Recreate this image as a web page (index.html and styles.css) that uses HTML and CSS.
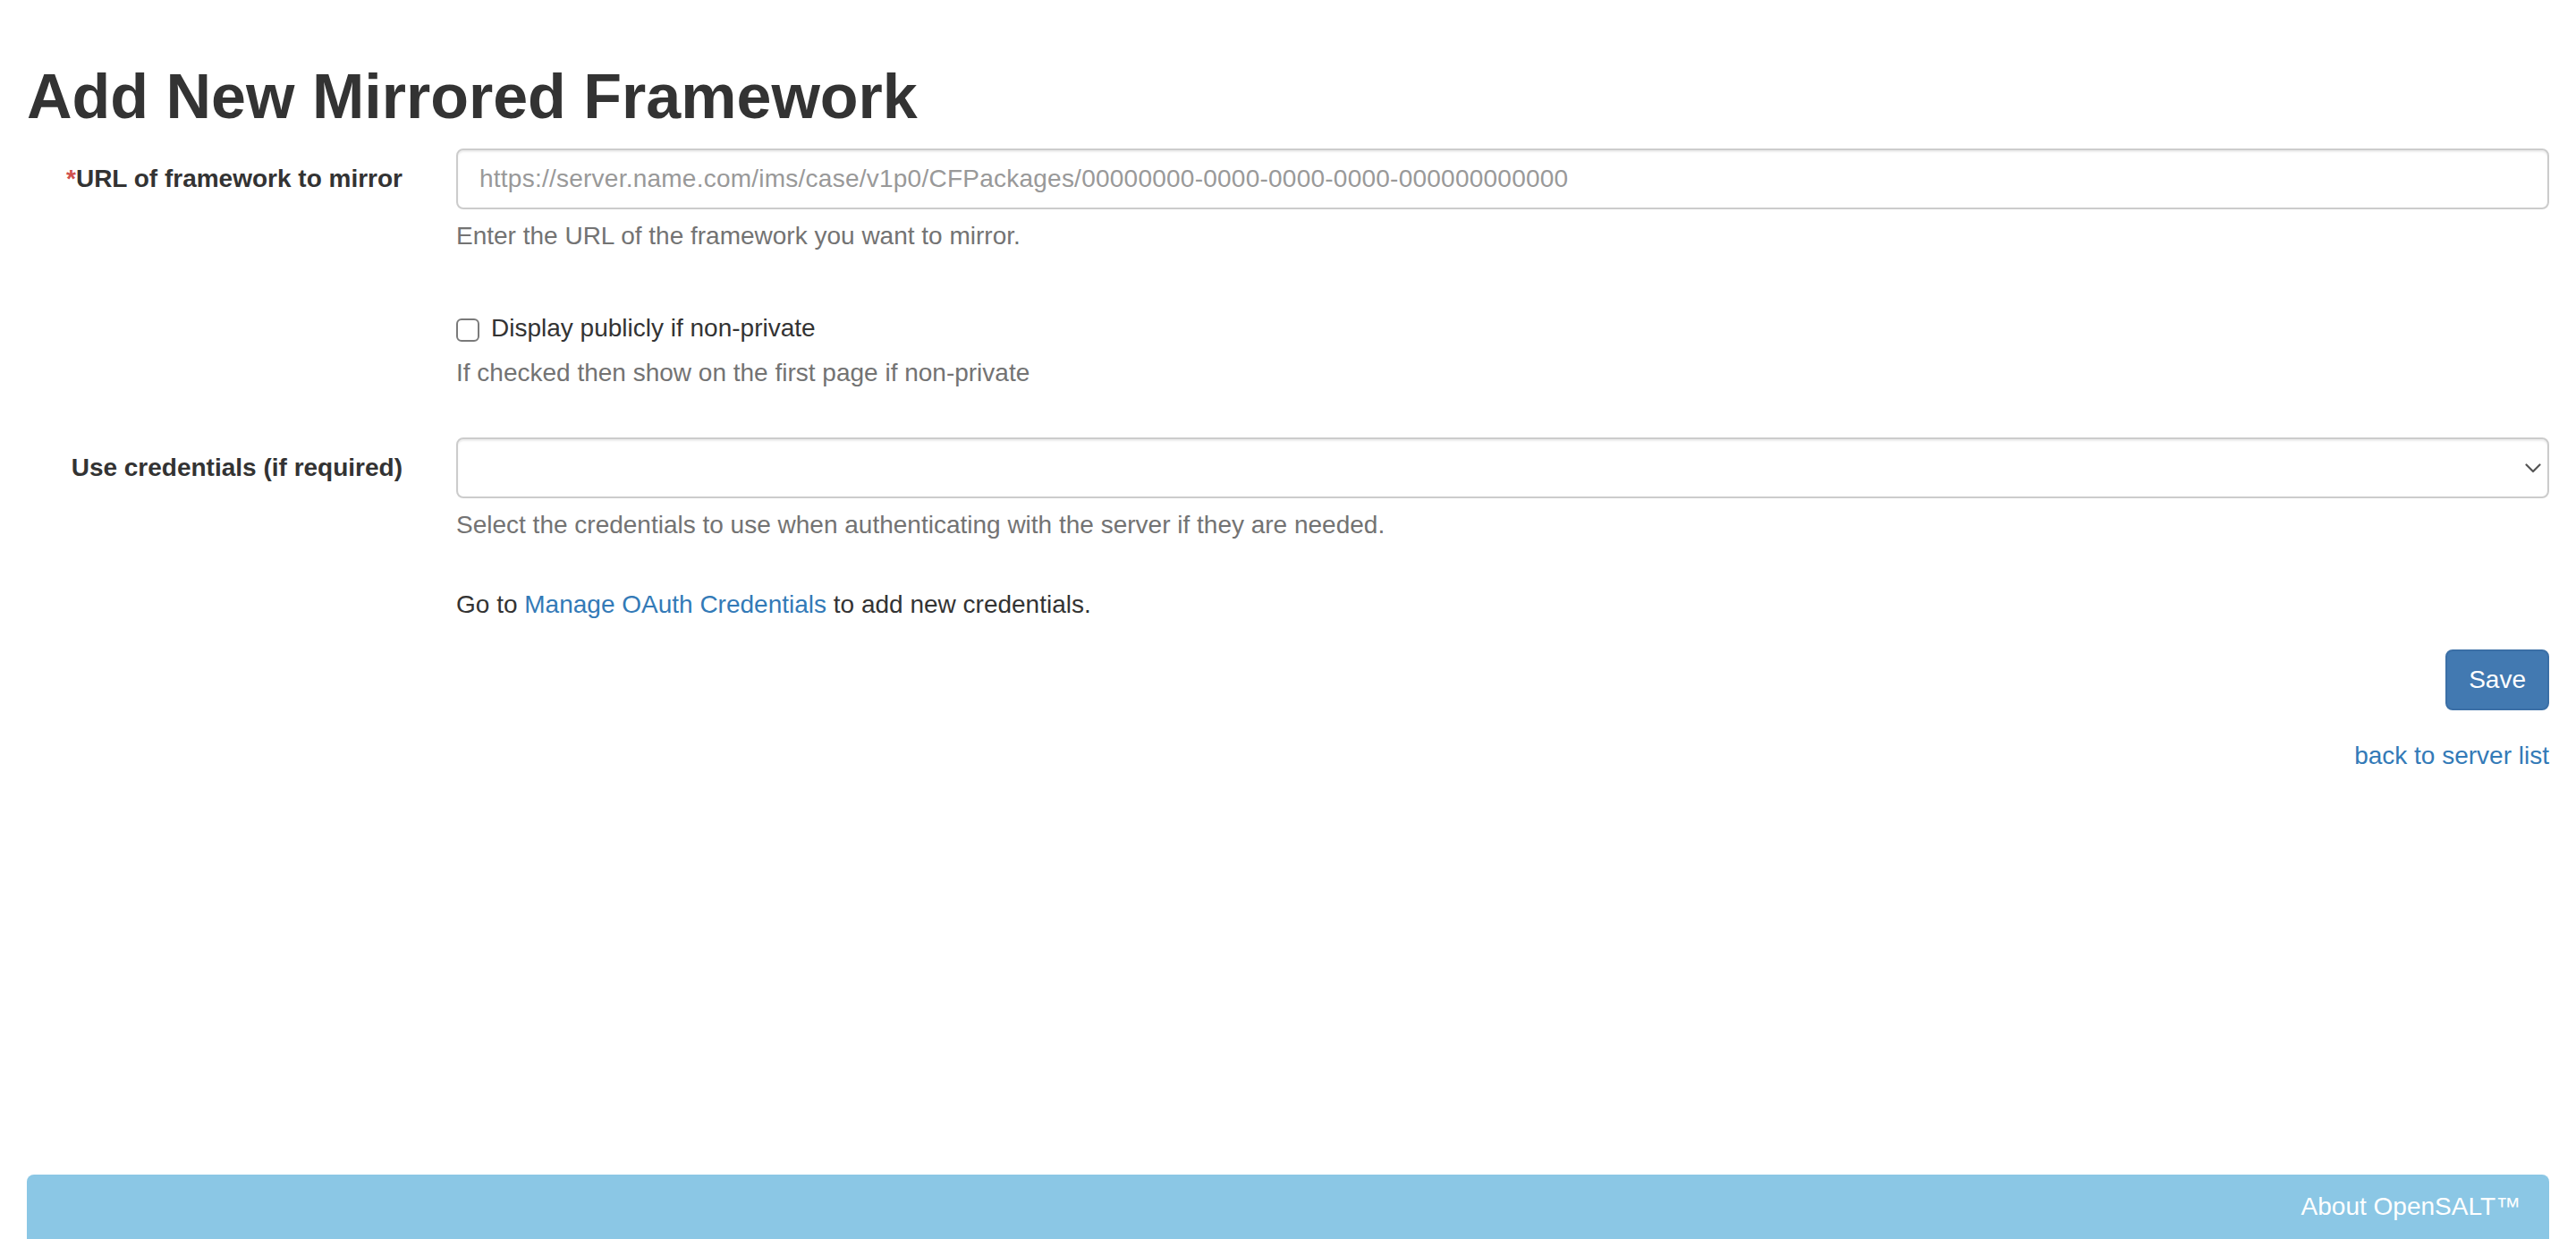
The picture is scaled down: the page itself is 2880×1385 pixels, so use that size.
FILE: index.html
```html
<!DOCTYPE html>
<html lang="en">
<head>
<meta charset="utf-8">
<title>Add New Mirrored Framework</title>
<link rel="stylesheet" href="styles.css">
</head>
<body>
<div class="page">
  <main class="container">
    <h1 class="title">Add New Mirrored Framework</h1>
    <form class="form">
      <div class="form-group">
        <label class="control-label" for="url"><span class="req">*</span>URL of framework to mirror</label>
        <div class="field">
          <input class="form-control url-input" id="url" type="text" placeholder="https://server.name.com/ims/case/v1p0/CFPackages/00000000-0000-0000-0000-000000000000">
          <p class="help-block">Enter the URL of the framework you want to mirror.</p>
        </div>
      </div>
      <div class="form-group group-check">
        <div class="spacer"></div>
        <div class="field">
          <label class="checkbox"><input type="checkbox" class="check"><span>Display publicly if non-private</span></label>
          <p class="help-block">If checked then show on the first page if non-private</p>
        </div>
      </div>
      <div class="form-group">
        <label class="control-label" for="cred">Use credentials (if required)</label>
        <div class="field">
          <div class="select-wrap">
            <select class="form-control select" id="cred"><option></option></select>
            <svg class="chevron" width="18" height="11" viewBox="0 0 18 11"><path d="M1.5 1.5 L9 9 L16.5 1.5" fill="none" stroke="#555" stroke-width="2.2" stroke-linecap="round" stroke-linejoin="round"/></svg>
          </div>
          <p class="help-block">Select the credentials to use when authenticating with the server if they are needed.</p>
        </div>
      </div>
      <div class="form-group group-note">
        <div class="spacer"></div>
        <div class="field">
          <p class="note">Go to <a href="#">Manage OAuth Credentials</a> to add new credentials.</p>
        </div>
      </div>
      <div class="actions">
        <button type="button" class="btn">Save</button>
      </div>
      <div class="back">
        <a href="#">back to server list</a>
      </div>
    </form>
  </main>
  <footer class="footer">
    <a href="#" class="footer-link">About OpenSALT™</a>
  </footer>
</div>
</body>
</html>
```

FILE: styles.css
```css
* { box-sizing: border-box; }
html, body { margin: 0; padding: 0; }
body {
  font-family: "Liberation Sans", Arial, sans-serif;
  font-size: 28px;
  line-height: 40px;
  color: #333;
  background: #fff;
}
a { color: #337ab7; text-decoration: none; }

.page {
  min-height: 100vh;
  display: flex;
  flex-direction: column;
}
.container {
  flex: 1;
  padding: 0 30px;
}
.title {
  font-size: 70px;
  line-height: 77px;
  font-weight: 700;
  margin: 70px 0 19px;
  color: #333;
}
.form-group {
  display: grid;
  grid-template-columns: 420px 1fr;
  column-gap: 60px;
  margin-bottom: 30px;
}
.control-label {
  text-align: right;
  font-weight: 700;
  padding-top: 14px;
}
.req { color: #d0504c; }
.field { min-width: 0; }
.form-control {
  display: block;
  width: 100%;
  height: 68px;
  padding: 12px 24px;
  font-family: inherit;
  font-size: 28px;
  line-height: 40px;
  color: #555;
  background: #fff;
  border: 2px solid #ccc;
  border-radius: 8px;
  box-shadow: inset 0 2px 2px rgba(0,0,0,.075);
  outline: none;
}
.url-input { letter-spacing: 0.24px; }
.form-control::placeholder { color: #999; }
.help-block {
  margin: 10px 0;
  color: #737373;
}
.group-check {
  padding-top: 23px;
  padding-bottom: 12px;
}
.checkbox {
  display: flex;
  align-items: center;
  gap: 13px;
  font-weight: 400;
}
.check {
  appearance: none;
  -webkit-appearance: none;
  margin: 4px 0 0;
  width: 26px;
  height: 26px;
  border: 2px solid #7a7a7a;
  border-radius: 6px;
  background: #fff;
  flex: none;
}
.select-wrap { position: relative; }
.select {
  appearance: none;
  -webkit-appearance: none;
}
.chevron {
  position: absolute;
  right: 9px;
  top: 29px;
}
.group-note { padding-top: 9px; }
.note { margin: 0; }
.actions {
  display: flex;
  justify-content: flex-end;
  margin-bottom: 31px;
}
.btn {
  font-family: inherit;
  font-size: 28px;
  line-height: 40px;
  padding: 12px 24px;
  color: #fff;
  background: #4279b1;
  border: 2px solid #3b6fa6;
  border-radius: 8px;
}
.back {
  text-align: right;
}
.footer {
  margin: 0 30px;
  height: 72px;
  padding: 16px 32px 0;
  background: #8bc7e5;
  border-radius: 8px 8px 0 0;
  text-align: right;
}
.footer-link { color: #fff; }
```
